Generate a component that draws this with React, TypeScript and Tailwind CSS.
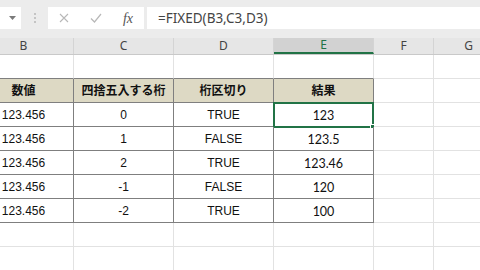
const colWidths = ["w-[100px]", "w-[100px]", "w-[100px]", "w-[100px]", "w-[60px]", "w-[70px]"];
const colLetters = ["B", "C", "D", "E", "F", "G"];

const headers = ["数値", "四捨五入する桁", "桁区切り", "結果"];

const rows = [
  ["123.456", "0", "TRUE", "123"],
  ["123.456", "1", "FALSE", "123.5"],
  ["123.456", "2", "TRUE", "123.46"],
  ["123.456", "-1", "FALSE", "120"],
  ["123.456", "-2", "TRUE", "100"],
];

const jpFont = "font-['Liberation_Sans','Noto_Sans_CJK_JP',sans-serif]";

function FormulaBar() {
  return (
    <div className="flex h-[38px] items-start bg-[#ececec] pt-[7px]">
      <div className="flex h-[22px] w-[21px] items-center justify-end bg-white pr-[5px]">
        <svg width="7" height="4" viewBox="0 0 7 4">
          <path d="M0 0h7L3.5 4z" fill="#7a7a7a" />
        </svg>
      </div>
      <div className="flex h-[22px] w-[27px] flex-col items-center justify-center gap-[2px]">
        <span className="h-[2px] w-[2px] bg-[#c4c4c4]" />
        <span className="h-[2px] w-[2px] bg-[#c4c4c4]" />
        <span className="h-[2px] w-[2px] bg-[#c4c4c4]" />
      </div>
      <div className="flex h-[22px] w-[96px] items-center bg-white">
        <div className="flex w-[32px] justify-center">
          <svg width="10" height="10" viewBox="0 0 10 10">
            <path d="M1 1l8 8M9 1l-8 8" stroke="#b8b8b8" strokeWidth="1.1" />
          </svg>
        </div>
        <div className="flex w-[32px] justify-center">
          <svg width="12" height="10" viewBox="0 0 12 10">
            <path d="M1 5.5l3.5 3.5L11 1" stroke="#b8b8b8" strokeWidth="1.2" fill="none" />
          </svg>
        </div>
        <div className="flex w-[32px] justify-center font-['Liberation_Serif',serif] text-[14px] italic text-[#555]">
          fx
        </div>
      </div>
      <div className="ml-[3px] flex h-[22px] flex-1 items-center bg-white pl-[11px] font-['Noto_Sans',sans-serif] text-[13.5px] text-[#444]">
        =FIXED(B3,C3,D3)
      </div>
    </div>
  );
}

function ColumnHeaders() {
  return (
    <div className="flex h-[17px] border-b border-[#c9c9c9] bg-[#e6e6e6] font-['Noto_Sans',sans-serif] text-[12px] text-[#444]">
      {colLetters.map((c, i) => (
        <div
          key={c}
          className={`${colWidths[i]} flex shrink-0 items-center justify-center border-r border-[#d4d4d4] ${
            c === "E" ? "border-b-2 border-b-[#217346] bg-[#d2d2d2] text-[#217346]" : ""
          }`}
        >
          {c}
        </div>
      ))}
    </div>
  );
}

function GridRow({
  cells,
  kind,
}: {
  cells?: string[];
  kind: "empty" | "above" | "header" | "data";
}) {
  return (
    <div className="flex h-[24px]">
      {colWidths.map((w, i) => {
        const inTable = i < 4 && (kind === "header" || kind === "data");
        const darkBottom = i < 4 && kind !== "empty";
        const selected = kind === "data" && i === 3 && cells?.[3] === "123";
        return (
          <div
            key={i}
            className={`${w} relative flex shrink-0 items-center justify-center border-b border-r ${
              darkBottom ? "border-b-[#7f7f7f]" : "border-b-[#e2e2e2]"
            } ${inTable ? "border-r-[#7f7f7f]" : "border-r-[#e2e2e2]"} ${
              kind === "header" && i < 4 ? "bg-[#ddd9c4] font-bold" : ""
            } ${
              i === 3 && kind === "data"
                ? "pt-[3px] font-['Lato',sans-serif] text-[12.5px]"
                : `${jpFont} text-[12px]`
            } text-[#111]`}
          >
            {cells && i < 4 ? cells[i] : ""}
            {selected && (
              <div className="absolute -left-px -top-px h-[26px] w-[101px] border-2 border-[#217346]">
                <span className="absolute -bottom-[3px] -right-[3px] h-[5px] w-[5px] border border-white bg-[#217346]" />
              </div>
            )}
          </div>
        );
      })}
    </div>
  );
}

export default function App() {
  return (
    <div className="h-[270px] w-[480px] overflow-hidden bg-white">
      <FormulaBar />
      <div className="-ml-[26px]">
        <ColumnHeaders />
        <GridRow kind="above" />
        <GridRow kind="header" cells={headers} />
        {rows.map((r, i) => (
          <GridRow key={i} kind="data" cells={r} />
        ))}
        <GridRow kind="empty" />
        <GridRow kind="empty" />
      </div>
    </div>
  );
}
